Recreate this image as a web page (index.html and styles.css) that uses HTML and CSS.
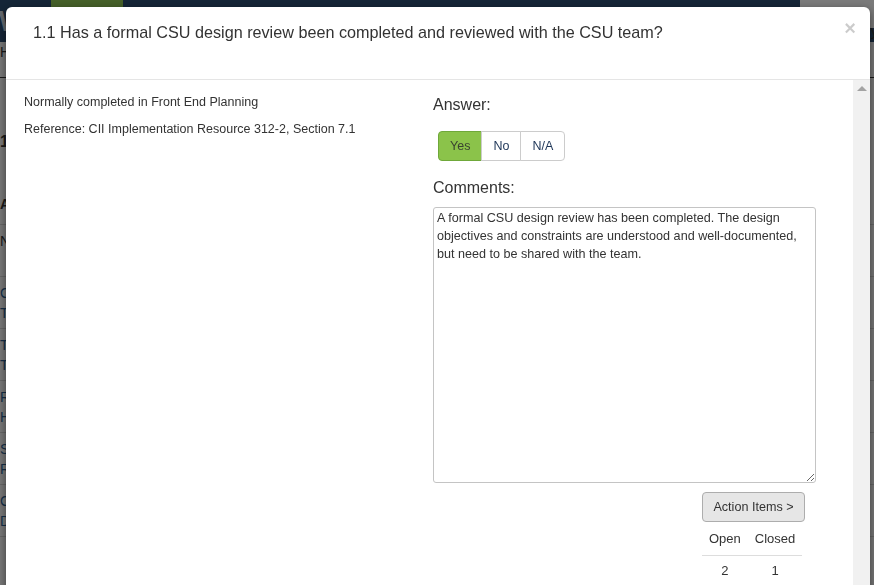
FILE: index.html
```html
<!DOCTYPE html>
<html lang="en">
<head>
    <meta charset="UTF-8">
    <title>Assessment Question</title>
    <link rel="stylesheet" href="styles.css">
</head>
<body>
    <div class="page">
        <div class="navbar">
            <span class="brand">W</span>
            <span class="nav-tab active">Projects</span>
            <span class="nav-link">Help</span>
            <span class="nav-spacer"></span>
            <span class="nav-link green">Your Test Tools</span>
            <span class="nav-tab light">Test Summary</span>
        </div>
        <div class="subbar">Home / Project / Assessment</div>
        <div class="section-title">1 Front End Planning</div>
        <div class="rows">
            <div class="row head">Answer</div>
            <div class="row">Normally completed</div>
            <div class="row link">CSU design review<br>Traceability</div>
            <div class="row link">Test strategy<br>Test standards</div>
            <div class="row link">Required staffing<br>Handover plan</div>
            <div class="row link">Start-up<br>Resources</div>
            <div class="row link">Commissioning<br>Documentation</div>
        </div>
    </div>

    <div class="backdrop"></div>

    <div class="modal">
        <div class="modal-header">
            <h4 class="modal-title">1.1 Has a formal CSU design review been completed and reviewed with the CSU team?</h4>
            <span class="close">&times;</span>
        </div>
        <div class="modal-body">
            <div class="body-main">
                <div class="guidance">
                    <p>Normally completed in Front End Planning</p>
                    <p>Reference: CII Implementation Resource 312-2, Section 7.1</p>
                </div>
                <div class="answer-col">
                    <label class="field-label">Answer:</label>
                    <div class="btn-group">
                        <span class="btn active">Yes</span>
                        <span class="btn">No</span>
                        <span class="btn">N/A</span>
                    </div>
                    <label class="field-label comments">Comments:</label>
                    <textarea class="comments-box">A formal CSU design review has been completed. The design objectives and constraints are understood and well-documented, but need to be shared with the team.</textarea>
                    <div class="action-items">
                        <span class="btn-action">Action Items &gt;</span>
                        <table class="counts">
                            <tr><th>Open</th><th>Closed</th></tr>
                            <tr><td>2</td><td>1</td></tr>
                        </table>
                    </div>
                </div>
            </div>
            <div class="scrollbar">
                <span class="arrow-up"></span>
            </div>
        </div>
    </div>
</body>
</html>
```

FILE: styles.css
```css
body {
    margin: 0;
    background: #eeeeee;
    font-family: "Liberation Sans", Arial, sans-serif;
    color: #333;
    overflow: hidden;
    height: 585px;
}

/* page behind the dialog */
.navbar {
    display: flex;
    height: 42px;
    background: #2a4b6e;
    color: #dfe6ee;
    font-size: 15px;
}

.brand {
    font-size: 30px;
    font-weight: bold;
    color: #c9d3dd;
    margin-left: -14px;
    width: 65px;
    padding-top: 4px;
}

.nav-tab, .nav-link {
    padding: 5px 14px 0;
}

.nav-tab.active {
    background: #8cc152;
    color: #eef6e4;
    width: 44px;
}

.nav-link.green {
    color: #8cc152;
}

.nav-spacer {
    flex: 1;
}

.nav-tab.light {
    background: #f4f4f4;
    color: #333;
    height: 23px;
    width: 46px;
    margin-left: 6px;
}

.subbar {
    height: 33px;
    padding: 2px 0 0 0;
    font-size: 14px;
    border-bottom: 1px solid #333;
}

.section-title {
    height: 110px;
    padding-top: 55px;
    box-sizing: border-box;
    font-size: 16px;
    font-weight: bold;
}

.rows .row {
    height: 52px;
    box-sizing: border-box;
    border-bottom: 1px solid #ccc;
    padding: 6px 0 0 0;
    font-size: 14px;
    line-height: 20px;
}

.rows .row.head {
    font-weight: bold;
    height: 37px;
}

.rows .row.link {
    color: #2a5d8f;
}

.backdrop {
    position: fixed;
    inset: 0;
    background: rgba(0, 0, 0, 0.5);
}

/* dialog */
.modal {
    position: fixed;
    left: 6px;
    top: 7px;
    width: 864px;
    height: 640px;
    background: #fff;
    border-radius: 6px;
    display: flex;
    flex-direction: column;
    box-shadow: 0 3px 9px rgba(0, 0, 0, 0.5);
}

.modal-header {
    display: flex;
    align-items: flex-start;
    height: 73px;
    box-sizing: border-box;
    padding: 12px 14px 0 27px;
    border-bottom: 1px solid #e5e5e5;
}

.modal-title {
    flex: 1;
    margin: 0;
    font-size: 16.2px;
    font-weight: normal;
    line-height: 26px;
}

.close {
    font-size: 20px;
    font-weight: bold;
    line-height: 1;
    color: #000;
    opacity: 0.2;
    margin-top: -1px;
}

.modal-body {
    flex: 1;
    display: flex;
}

.body-main {
    flex: 1;
    display: grid;
    grid-template-columns: 409px 383px;
    padding: 14px 0 0 18px;
    font-size: 12.5px;
}

.guidance p {
    margin: 0 0 10px;
    line-height: 17px;
}

.answer-col {
    display: flex;
    flex-direction: column;
    align-items: flex-start;
}

.field-label {
    font-size: 16px;
    line-height: 22px;
    margin-bottom: 15px;
}

.field-label.comments {
    margin-top: 16px;
    margin-bottom: 8px;
}

.btn-group {
    display: flex;
    margin-left: 5px;
}

.btn {
    padding: 5px 11px;
    line-height: 18px;
    font-size: 12.5px;
    color: #1d3557;
    background: #fff;
    border: 1px solid #ccc;
    margin-left: -1px;
}

.btn:first-child {
    border-radius: 4px 0 0 4px;
    margin-left: 0;
}

.btn:last-child {
    border-radius: 0 4px 4px 0;
}

.btn.active {
    background: #8bc34a;
    border-color: #6fa83a;
    color: #3a4430;
}

.comments-box {
    width: 383px;
    height: 276px;
    box-sizing: border-box;
    margin: 0;
    padding: 1px 3px;
    border: 1px solid #c4c4c4;
    border-radius: 3px;
    font-family: "Liberation Sans", Arial, sans-serif;
    font-size: 12.6px;
    line-height: 18px;
    color: #333;
    resize: vertical;
}

.action-items {
    align-self: flex-end;
    margin: 9px 11px 0 0;
    width: 103px;
}

.btn-action {
    display: block;
    padding: 5px 0;
    text-align: center;
    font-size: 12.6px;
    line-height: 18px;
    background: #e6e6e6;
    border: 1px solid #adadad;
    border-radius: 4px;
}

.counts {
    border-collapse: collapse;
    width: 100px;
    font-size: 13px;
}

.counts th, .counts td {
    font-weight: normal;
    text-align: center;
    padding: 0 7px;
    line-height: 17px;
}

.counts th {
    padding-top: 8px;
    padding-bottom: 8px;
    border-bottom: 1px solid #ddd;
}

.counts td {
    padding-top: 6px;
}

.scrollbar {
    width: 17px;
    background: #f1f1f1;
    display: flex;
    justify-content: center;
}

.arrow-up {
    margin-top: 6px;
    width: 0;
    height: 0;
    border-left: 5px solid transparent;
    border-right: 5px solid transparent;
    border-bottom: 5px solid #a3a3a3;
}
```
